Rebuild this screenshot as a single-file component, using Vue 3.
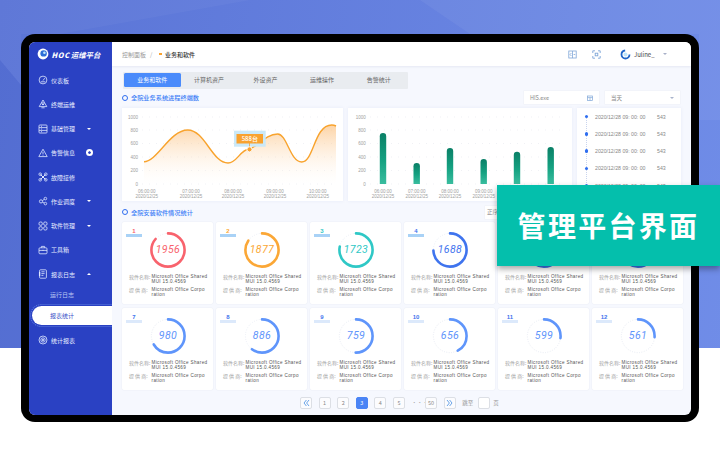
<script setup>
const menu = [
  { name: '仪表板', icon: 'dash' },
  { name: '终端运维', icon: 'term' },
  { name: '基础管理', icon: 'base', mark: 'down' },
  { name: '告警信息', icon: 'alarm', mark: 'badge' },
  { name: '故障接修', icon: 'fault' },
  { name: '作业调度', icon: 'job', mark: 'down' },
  { name: '软件管理', icon: 'soft', mark: 'down' },
  { name: '工具箱', icon: 'tool' },
  { name: '报表日志', icon: 'doc', mark: 'up' },
]
const tabs = ['业务和软件', '计算机资产', '外设资产', '运维操作', '告警统计']
const yAxis = [
  { v: 1000, y: 9 }, { v: 800, y: 22 }, { v: 600, y: 35.5 },
  { v: 400, y: 49 }, { v: 200, y: 62.5 }, { v: 0, y: 76 },
]
const lineX = [
  { x: 24.7, t: '06:00:00' }, { x: 69, t: '07:00:00' }, { x: 111, t: '08:00:00' },
  { x: 153, t: '09:00:00' }, { x: 195.7, t: '10:00:00' },
]
const linePath = 'M22 53.7C35 53.7 48 22 65.7 22C83 22 90 55 106 55C115 55 118 42 127 41C135 40 143 26 155.7 26C165 26 168 54 179.7 54C192 54 192 17 209.7 17C212 17 214 18 214 18'
const bars = [
  { x: 35, top: 25, t: '06:00:00' }, { x: 68.7, top: 55, t: '07:00:00' }, { x: 102, top: 40, t: '08:00:00' },
  { x: 135.7, top: 51, t: '09:00:00' }, { x: 169, top: 43.7 }, { x: 202.7, top: 39 },
]
const barPath = (b) => `M${b.x - 3.2} 76V${b.top + 3.2}A3.2 3.2 0 0 1 ${b.x + 3.2} ${b.top + 3.2}V76Z`
const RADIUS = 16.6
const CIRC = 2 * Math.PI * RADIUS
const cards = [
  { n: 1, v: 1956, pct: 0.86, color: '#f8636d', top: true },
  { n: 2, v: 1877, pct: 0.84, color: '#fba736', top: true },
  { n: 3, v: 1723, pct: 0.78, color: '#2fc8c6', top: true },
  { n: 4, v: 1688, pct: 0.74, color: '#3f74ee', top: true },
  { n: 5, pct: 0.7, color: '#3f74ee' },
  { n: 6, pct: 0.7, color: '#3f74ee' },
  { n: 7, v: 980, pct: 0.66, color: '#5f95fb' },
  { n: 8, v: 886, pct: 0.6, color: '#5f95fb' },
  { n: 9, v: 759, pct: 0.5, color: '#5f95fb' },
  { n: 10, v: 656, pct: 0.42, color: '#5f95fb' },
  { n: 11, v: 599, pct: 0.27, color: '#5f95fb' },
  { n: 12, v: 561, pct: 0.26, color: '#5f95fb' },
]
const pages = ['1', '2', '3', '4', '5']
</script>

<template>
  <div class="page">
    <svg class="deco" width="720" height="348" viewBox="0 0 720 348" aria-hidden="true">
      <polygon points="0,0 250,0 60,34 21,34 21,85 0,60" fill="#ffffff" opacity="0.035" />
      <polygon points="0,60 21,85 21,348 0,348" fill="#1c2fa8" opacity="0.1" />
      <polygon points="420,0 720,0 720,120 699,120 699,34 470,34" fill="#ffffff" opacity="0.05" />
    </svg>
    <div class="frame">
      <div class="screen">
        <aside class="side">
          <div class="logo">
            <svg width="12" height="12" viewBox="0 0 12 12">
              <circle cx="6" cy="6" r="5.4" fill="#fff" />
              <circle cx="6.6" cy="5.4" r="3.2" fill="#2e6fd8" />
              <circle cx="7.4" cy="4.8" r="1.3" fill="#bfe6fb" />
            </svg>
            <span class="logo-text"><b>HOC</b>运维平台</span>
          </div>
          <div v-for="m in menu" :key="m.name" class="item">
            <svg class="ico" width="10" height="10" viewBox="0 0 10 10" fill="none" stroke="#dfe8ff" stroke-width="0.8">
              <g v-if="m.icon === 'dash'"><circle cx="5" cy="5" r="3.9" /><path d="M5 5.6 6.7 3.2M2.8 6.8h4.4" /></g>
              <g v-else-if="m.icon === 'term'"><path d="M5 1 8.8 7.6H1.2Z" /><path d="M3.4 8.8h3.2M4 5.6h2" /><circle cx="5" cy="4.6" r="1" /></g>
              <g v-else-if="m.icon === 'base'"><rect x="1" y="1" width="8" height="8" rx="0.8" /><path d="M1 3.6h8M1 6.4h8M3 2.3h1M3 5h1M3 7.7h1" /></g>
              <g v-else-if="m.icon === 'alarm'"><path d="M5 1.2 9.2 8.6H.8Z" /><path d="M5 3.8v2.6M5 7v.6" /></g>
              <g v-else-if="m.icon === 'fault'"><path d="M2.4 2.4 7.6 7.6M7.6 2.4 2.4 7.6" stroke-width="1" /><circle cx="2.2" cy="2.2" r="1.3" /><circle cx="7.8" cy="2.2" r="1.3" /><circle cx="2.2" cy="7.8" r="1.3" /><circle cx="7.8" cy="7.8" r="1.3" /></g>
              <g v-else-if="m.icon === 'job'"><circle cx="3" cy="5.4" r="1.6" /><circle cx="7.4" cy="2.6" r="1.3" /><circle cx="7.4" cy="7.6" r="1.3" /><path d="M4.4 4.6 6.3 3.3M4.4 6.2 6.3 7" /></g>
              <g v-else-if="m.icon === 'soft'"><rect x="1" y="1" width="3.3" height="3.3" rx="1.2" /><rect x="5.7" y="1" width="3.3" height="3.3" rx="1.2" /><rect x="1" y="5.7" width="3.3" height="3.3" rx="1.2" /><rect x="5.7" y="5.7" width="3.3" height="3.3" rx="1.2" /></g>
              <g v-else-if="m.icon === 'tool'"><rect x="1" y="2.8" width="8" height="6" rx="1" /><path d="M3.4 2.8V1.4h3.2v1.4M1 5.4h8M5 4.8v1.2" /></g>
              <g v-else><rect x="1.6" y="0.8" width="6.8" height="8.4" rx="0.8" /><path d="M3.4 2.8h3.2M3.4 4.6h3.2M3.4 6.4h2" /><path d="M1.6 3v4" stroke-width="1.3" /></g>
            </svg>
            <span>{{ m.name }}</span>
            <i v-if="m.mark === 'down'" class="tri down"></i>
            <i v-else-if="m.mark === 'up'" class="tri up"></i>
            <i v-else-if="m.mark === 'badge'" class="badge"></i>
          </div>
          <div class="sub">运行日志</div>
          <div class="sub-active">报表统计</div>
          <div class="item last">
            <svg class="ico" width="10" height="10" viewBox="0 0 10 10" fill="none" stroke="#dfe8ff" stroke-width="0.8">
              <circle cx="5" cy="5" r="4" /><circle cx="5" cy="5" r="2.2" /><circle cx="5" cy="5" r="0.7" fill="#dfe8ff" />
            </svg>
            <span>统计报表</span>
          </div>
        </aside>

        <section class="main">
          <header class="head">
            <span class="crumb">控制面板</span>
            <span class="slash">/</span>
            <i class="sq"></i>
            <span class="crumb-now">业务和软件</span>
            <span class="head-right">
              <svg width="9" height="9" viewBox="0 0 9 9" fill="none" stroke="#7fa6d8" stroke-width="0.8">
                <rect x="0.8" y="1" width="7.4" height="7" /><path d="M4.5 1v7M3.4 3 2 4.5 3.4 6M5.6 4.5h1.6" />
              </svg>
              <svg width="9" height="9" viewBox="0 0 9 9" fill="none" stroke="#7fa6d8" stroke-width="0.9">
                <path d="M.8 3V.8H3M6 .8h2.2V3M8.2 6v2.2H6M3 8.2H.8V6" /><rect x="3.2" y="3.2" width="2.6" height="2.6" />
              </svg>
              <span class="user">
                <svg width="11" height="11" viewBox="0 0 11 11" fill="none">
                  <circle cx="5.5" cy="5.5" r="4" stroke="#1f66c9" stroke-width="1.8" stroke-dasharray="18 7" />
                  <circle cx="5.5" cy="5.5" r="2" fill="#bfe6fb" />
                </svg>
                <span class="uname">Juline_</span>
                <i class="tri head-tri"></i>
              </span>
            </span>
          </header>

          <div class="body">
            <div class="tabs">
              <div v-for="(t, i) in tabs" :key="t" class="tab" :class="{ on: i === 0 }">{{ t }}</div>
            </div>

            <div class="title-row">
              <div class="title"><i class="ring-dot"></i>全院业务系统进程终端数</div>
              <div class="select sel-first">HIS.exe
                <svg width="6" height="6" viewBox="0 0 6 6" fill="none" stroke="#7fa6d8" stroke-width="0.7"><rect x="0.5" y="1" width="5" height="4.4" /><path d="M0.5 2.6h5M3 2.6v2.8" /></svg>
              </div>
              <div class="select">当天<i class="tri sel-tri"></i></div>
            </div>

            <div class="charts">
              <div class="panel">
                <svg width="221" height="93" viewBox="0 0 221 93">
                  <defs>
                    <linearGradient id="areaFill" x1="0" y1="0" x2="0" y2="1">
                      <stop offset="0" stop-color="#fbb05c" stop-opacity="0.55" />
                      <stop offset="1" stop-color="#fff" stop-opacity="0.1" />
                    </linearGradient>
                  </defs>
                  <g v-for="a in yAxis" :key="a.v">
                    <line x1="20" x2="216" :y1="a.y" :y2="a.y" stroke="#e6e8ee" stroke-width="0.6" stroke-dasharray="1 6" />
                    <text x="16" :y="a.y + 1.6" text-anchor="end" class="ax">{{ a.v }}</text>
                  </g>
                  <path :d="linePath + 'V76H22Z'" fill="url(#areaFill)" />
                  <path :d="linePath" fill="none" stroke="#f8a32d" stroke-width="1.4" />
                  <g v-for="l in lineX" :key="l.t">
                    <text :x="l.x" y="84.5" text-anchor="middle" class="ax">{{ l.t }}</text>
                    <text :x="l.x" y="89.8" text-anchor="middle" class="ax">2020/12/25</text>
                  </g>
                  <rect x="112" y="22.7" width="31.7" height="16" fill="#cbe9f8" />
                  <rect x="114.5" y="26" width="26.5" height="9.5" fill="#f9a22f" />
                  <text x="127.8" y="33" text-anchor="middle" class="tip">588台</text>
                  <line x1="127.5" y1="35" x2="127.5" y2="40" stroke="#f9a22f" stroke-width="0.8" />
                  <circle cx="127.5" cy="41.4" r="2.6" fill="#f9a22f" stroke="#fff" stroke-width="1" />
                </svg>
              </div>
              <div class="panel">
                <svg width="224" height="93" viewBox="0 0 224 93">
                  <defs>
                    <linearGradient id="barFill" x1="0" y1="0" x2="0" y2="1">
                      <stop offset="0" stop-color="#0a8268" />
                      <stop offset="0.55" stop-color="#16a685" />
                      <stop offset="1" stop-color="#3cc3a4" />
                    </linearGradient>
                    <pattern id="barDots" width="2" height="2" patternUnits="userSpaceOnUse">
                      <circle cx="1" cy="1" r="0.45" fill="#05503f" />
                    </pattern>
                  </defs>
                  <g v-for="a in yAxis" :key="a.v">
                    <line x1="22" x2="218" :y1="a.y" :y2="a.y" stroke="#e6e8ee" stroke-width="0.6" stroke-dasharray="1 6" />
                    <text x="17.7" :y="a.y + 1.6" text-anchor="end" class="ax">{{ a.v }}</text>
                  </g>
                  <g v-for="b in bars" :key="b.x">
                    <path :d="barPath(b)" fill="url(#barFill)" />
                    <path :d="barPath(b)" fill="url(#barDots)" opacity="0.45" />
                    <template v-if="b.t">
                      <text :x="b.x" y="84.5" text-anchor="middle" class="ax">{{ b.t }}</text>
                      <text :x="b.x" y="89.8" text-anchor="middle" class="ax">2020/12/25</text>
                    </template>
                  </g>
                </svg>
              </div>
              <div class="panel list">
                <div v-for="i in 5" :key="i" class="log">
                  <i class="log-dot"></i>
                  <span class="log-date">2020/12/28 09: 00: 00</span>
                  <span class="log-num">543</span>
                </div>
              </div>
            </div>

            <div class="title-row second">
              <div class="title"><i class="ring-dot"></i>全院安装软件情况统计</div>
              <div class="select sel-solo">正序</div>
            </div>

            <div class="cards">
              <div v-for="c in cards" :key="c.n" class="card">
                <div v-if="c.v" class="rank" :class="{ plain: !c.top }" :style="{ color: c.top ? c.color : '#3f74ee' }">{{ c.n }}</div>
                <svg class="ring" width="38" height="38" viewBox="0 0 38 38">
                  <circle cx="19" cy="19" :r="RADIUS" fill="none" stroke="#e6eaf3" stroke-width="1" stroke-dasharray="0.8 1.6" />
                  <circle
                    cx="19" cy="19" :r="RADIUS" fill="none" :stroke="c.color" stroke-width="2.6" stroke-linecap="round"
                    :stroke-dasharray="`${CIRC * c.pct} ${CIRC}`" transform="rotate(-90 19 19)"
                  />
                  <text v-if="c.v" x="19" y="22.4" text-anchor="middle" class="num" :fill="c.color">{{ c.v }}</text>
                </svg>
                <div class="info">
                  <span class="lab">软件名称:</span>
                  <span class="val"><em>Microsoft Office Shared</em><em>MUI 15.0.4569</em></span>
                  <span class="lab">提 供 商:</span>
                  <span class="val"><em>Microsoft Office Corpo</em><em>ration</em></span>
                </div>
              </div>
            </div>

            <div class="pager">
              <span class="pg arrow">
                <svg width="7" height="8" viewBox="0 0 7 8" fill="none" stroke="#6aa4e8" stroke-width="1"><path d="M3.4 1 1 4l2.4 3M6 1 3.6 4 6 7" /></svg>
              </span>
              <span v-for="p in pages" :key="p" class="pg" :class="{ cur: p === '3' }">{{ p }}</span>
              <span class="dots">···</span>
              <span class="pg">50</span>
              <span class="pg arrow">
                <svg width="7" height="8" viewBox="0 0 7 8" fill="none" stroke="#6aa4e8" stroke-width="1"><path d="M1 1l2.4 3L1 7M3.6 1 6 4 3.6 7" /></svg>
              </span>
              <span class="jump">跳至</span>
              <span class="pg input"></span>
              <span class="jump">页</span>
            </div>
          </div>
        </section>
      </div>
    </div>
    <div class="banner">管理平台界面</div>
  </div>
</template>

<style>
html, body { margin: 0; background: #fff; }
</style>

<style scoped>
.page {
  position: relative;
  width: 720px;
  height: 450px;
  overflow: hidden;
  padding: 34px 0 0 21px;
  box-sizing: border-box;
  background: linear-gradient(#0000 348px, #fff 348px), linear-gradient(100deg, #5a74d6, #708de8);
  font-family: "Noto Sans CJK SC", "Noto Sans", sans-serif;
  color: #555;
}
.deco { position: absolute; left: 0; top: 0; }
.frame {
  position: relative;
  width: 678px;
  height: 388px;
  box-sizing: border-box;
  padding: 8px 8px 7px;
  background: #000;
  border-radius: 14px;
}
.screen {
  display: flex;
  height: 373px;
  border-radius: 6px;
  overflow: hidden;
  background: #f6f8fe;
}
.side {
  flex: 0 0 83px;
  background: #2a41c3;
  color: #e8eeff;
  font-size: 6px;
  overflow: hidden;
}
.logo {
  display: flex;
  align-items: center;
  gap: 2.5px;
  height: 24px;
  padding-left: 8px;
  margin-bottom: 1.9px;
}
.logo-text {
  color: #fff;
  font-size: 7.4px;
  font-weight: 700;
  font-style: italic;
  white-space: nowrap;
}
.logo-text b { letter-spacing: 0.6px; margin-right: 1px; }
.item {
  position: relative;
  display: flex;
  align-items: center;
  height: 24.25px;
  padding-left: 9px;
  gap: 3px;
  white-space: nowrap;
}
.item .ico { flex: none; }
.item.last { margin-top: 3px; }
.tri {
  position: absolute;
  left: 58px;
  width: 0;
  height: 0;
  border-left: 2.2px solid transparent;
  border-right: 2.2px solid transparent;
}
.tri.down { border-top: 2.8px solid #fff; }
.tri.up { border-bottom: 2.8px solid #fff; }
.badge {
  position: absolute;
  left: 56.5px;
  width: 7px;
  height: 7px;
  border-radius: 50%;
  box-sizing: border-box;
  background: #fff;
  border: 2px solid #fff;
  box-shadow: inset 0 0 0 2px #2a41c3;
}
.sub {
  height: 18px;
  line-height: 18px;
  padding-left: 21px;
  color: #bcc8f4;
}
.sub-active {
  height: 19px;
  line-height: 19px;
  margin: 2px 0 0 3px;
  padding-left: 18px;
  background: #fff;
  color: #3a50c8;
  border-radius: 10px 0 0 10px;
  outline: 1px dotted #5f7fe0;
  outline-offset: 1px;
}
.main {
  flex: 1;
  min-width: 0;
  display: flex;
  flex-direction: column;
}
.head {
  flex: 0 0 24px;
  display: flex;
  align-items: center;
  background: #fff;
  padding-left: 10px;
  font-size: 6px;
  box-shadow: 0 1px 2px rgba(120, 130, 170, 0.12);
  position: relative;
}
.crumb { color: #9a9a9a; }
.slash { color: #aaa; margin: 0 7px 0 4px; }
.sq { width: 2.5px; height: 2.5px; background: #f9a22f; margin-right: 3px; }
.crumb-now { color: #333; font-weight: 500; }
.head-right {
  margin-left: auto;
  display: flex;
  align-items: center;
  gap: 15px;
  padding-right: 24px;
}
.user { display: flex; align-items: center; gap: 3px; margin-left: 4px; position: relative; }
.uname { color: #444; width: 26px; font-size: 6px; }
.head-tri {
  position: static;
  border-top: 2.6px solid #a8b0c8;
}
.body {
  flex: 1;
  padding: 6px 8px 0 10px;
  min-height: 0;
}
.tabs {
  display: flex;
  width: 285px;
  height: 17px;
  margin-left: 1px;
  background: #e9ecf0;
  border-radius: 1px;
  font-size: 6px;
  color: #666;
  box-sizing: border-box;
  padding: 1px 1px 2px;
}
.tab { flex: 1; text-align: center; line-height: 14px; border-radius: 1.5px; }
.tab.on { background: #4a8bfb; color: #fff; }
.title-row {
  display: flex;
  align-items: center;
  height: 13px;
  margin-top: 2px;
  gap: 6px;
}
.title-row.second { height: 14px; margin-top: 4px; }
.title {
  display: flex;
  align-items: center;
  margin-right: auto;
  color: #3c7ef6;
  font-size: 6.2px;
  font-weight: 500;
  gap: 3px;
  padding-left: 0;
}
.ring-dot {
  width: 6px;
  height: 6px;
  border-radius: 50%;
  border: 1.5px solid #2f6ef0;
  box-sizing: border-box;
  margin-right: 0;
}
.select {
  display: flex;
  align-items: center;
  justify-content: space-between;
  width: 75px;
  height: 13px;
  box-sizing: border-box;
  padding: 0 6px;
  background: #fff;
  box-shadow: 0 0 0 0.5px #eef0f6;
  font-size: 5.5px;
  color: #888;
}
.select:last-child { margin-right: 3px; }
.sel-solo { margin-right: 123px !important; padding-left: 2px; }
.sel-tri { position: static; border-top: 2.6px solid #a9b4cc; }
.charts {
  display: grid;
  grid-template-columns: 221px 224px 104px;
  column-gap: 5px;
  margin-top: 4px;
  height: 93px;
}
.panel { background: #fff; box-shadow: 0 0 3px rgba(190, 200, 230, 0.25); }
.panel svg { display: block; }
.ax { font-size: 4.5px; fill: #a0a0a0; font-family: "Liberation Sans", sans-serif; }
.tip { font-size: 6px; fill: #fff; font-weight: 500; font-family: "Noto Sans CJK SC", sans-serif; }
.list { position: relative; font-size: 5.2px; color: #888; }
.list::before {
  content: "";
  position: absolute;
  left: 9px;
  top: 8px;
  bottom: 8px;
  border-left: 0.5px dotted #c9d4ee;
}
.log {
  display: flex;
  align-items: center;
  height: 17.25px;
  padding-left: 7.5px;
  white-space: nowrap;
  position: relative;
}
.log-dot { width: 3.5px; height: 3.5px; border-radius: 50%; background: #2f6ef0; flex: none; }
.log-date { margin-left: 7px; width: 62px; flex: none; font-family: "Liberation Sans", sans-serif; }
.log-num { font-family: "Liberation Sans", sans-serif; }
.cards {
  display: grid;
  grid-template-columns: repeat(6, 91px);
  grid-auto-rows: 82px;
  gap: 4px 3px;
  margin-top: 3px;
}
.card {
  position: relative;
  background: #fff;
  border-radius: 2px;
  box-shadow: 0 0 0 0.5px #edf0f8;
  padding-top: 9px;
  box-sizing: border-box;
  overflow: hidden;
}
.rank {
  position: absolute;
  left: 4px;
  top: 5.5px;
  width: 16px;
  height: 9px;
  line-height: 7px;
  text-align: center;
  font-size: 6px;
  font-weight: 700;
  font-family: "Liberation Sans", sans-serif;
  background: linear-gradient(#0000 5.5px, #a9d2f6 5.5px);
}
.rank.plain { background: linear-gradient(#0000 6.5px, #dce9fb 6.5px); }
.ring { display: block; margin: 0 auto; }
.num { font-size: 10.5px; font-style: italic; font-weight: 400; letter-spacing: 0.4px; font-family: Roboto, "Liberation Sans", sans-serif; }
.info {
  display: grid;
  grid-template-columns: 22.5px 1fr;
  row-gap: 2.1px;
  margin-top: 5px;
  padding-left: 7px;
  font-size: 5px;
  line-height: 5.3px;
  white-space: nowrap;
}
.lab { color: #a3a3a3; }
.val { color: #555; font-family: "Liberation Sans", sans-serif; font-size: 4.6px; letter-spacing: 0.35px; }
.val em { display: block; font-style: normal; }
.pager {
  display: flex;
  align-items: center;
  gap: 6.6px;
  margin: 7px 0 0 178px;
  font-size: 5.5px;
  color: #888;
}
.pg {
  flex: none;
  display: flex;
  align-items: center;
  justify-content: center;
  width: 12px;
  height: 12px;
  box-sizing: border-box;
  border: 1px solid #dcdfe5;
  border-radius: 2px;
  background: #fcfcfe;
}
.pg.cur { background: #4a84f5; color: #fff; border-color: #4a84f5; }
.pg.input { margin-left: -2px; margin-right: -3px; background: #fff; }
.dots { width: 6.8px; text-align: center; color: #aaa; }
.jump { color: #999; }
.banner {
  position: absolute;
  left: 497px;
  top: 185px;
  width: 223px;
  height: 81px;
  display: flex;
  align-items: center;
  justify-content: center;
  padding-bottom: 2px;
  box-sizing: border-box;
  background: #04bfac;
  color: #fff;
  font-size: 28px;
  font-weight: 700;
  letter-spacing: 2.3px;
  box-shadow: 0 3px 6px rgba(0, 0, 0, 0.35);
  white-space: nowrap;
}
</style>
